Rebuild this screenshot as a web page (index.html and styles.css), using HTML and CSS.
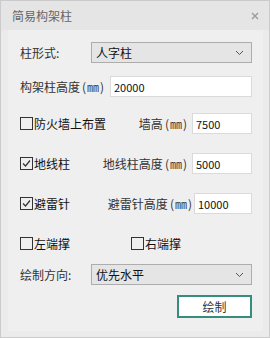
FILE: index.html
```html
<!DOCTYPE html>
<html lang="zh">
<head>
    <meta charset="UTF-8">
    <title>简易构架柱</title>
    <link rel="stylesheet" href="styles.css">
</head>
<body>
    <div class="window">
        <div class="titlebar">
            <span class="title">简易构架柱</span>
            <svg class="close" width="8" height="8" viewBox="0 0 8 8"><path d="M1 1L7 7M7 1L1 7" stroke="#9a9a9a" stroke-width="1.4"/></svg>
        </div>
        <div class="frame">
            <div class="panel">
                <div class="row row-first">
                    <span class="label label-short">柱形式:</span>
                    <div class="select">
                        <span>人字柱</span>
                        <svg width="9" height="6" viewBox="0 0 9 6"><path d="M1 1L4.5 4.5L8 1" fill="none" stroke="#555" stroke-width="1"/></svg>
                    </div>
                </div>
                <div class="row row-height">
                    <span class="label label-long">构架柱高度<span class="unit">(㎜)</span></span>
                    <div class="input input-wide">20000</div>
                </div>
                <div class="row row-wall">
                    <span class="check"><span class="box"></span>防火墙上布置</span>
                    <span class="label label-right">墙高<span class="unit">(㎜)</span></span>
                    <div class="input">7500</div>
                </div>
                <div class="row row-gap">
                    <span class="check"><span class="box"><svg width="11" height="11" viewBox="0 0 11 11"><path d="M2 5.5L4.5 8L9 2.5" fill="none" stroke="#333" stroke-width="1.2"/></svg></span>地线柱</span>
                    <span class="label label-right">地线柱高度<span class="unit">(㎜)</span></span>
                    <div class="input">5000</div>
                </div>
                <div class="row row-gap">
                    <span class="check"><span class="box"><svg width="11" height="11" viewBox="0 0 11 11"><path d="M2 5.5L4.5 8L9 2.5" fill="none" stroke="#333" stroke-width="1.2"/></svg></span>避雷针</span>
                    <span class="label label-right">避雷针高度<span class="unit">(㎜)</span></span>
                    <div class="input input-tight">10000</div>
                </div>
                <div class="row row-gap">
                    <span class="check check-half"><span class="box"></span>左端撑</span>
                    <span class="check"><span class="box"></span>右端撑</span>
                </div>
                <div class="row row-dir">
                    <span class="label label-short">绘制方向:</span>
                    <div class="select">
                        <span>优先水平</span>
                        <svg width="9" height="6" viewBox="0 0 9 6"><path d="M1 1L4.5 4.5L8 1" fill="none" stroke="#555" stroke-width="1"/></svg>
                    </div>
                </div>
                <div class="actions">
                    <button class="draw-btn">绘制</button>
                </div>
            </div>
        </div>
    </div>
</body>
</html>
```

FILE: styles.css
```css
body {
    margin: 0;
    font-family: "Noto Sans CJK SC", "Noto Sans", sans-serif;
    font-size: 12px;
    color: #222;
}
.window {
    width: 270px;
    height: 338px;
    box-sizing: border-box;
    border: 1px solid #cbcbcb;
    background: #ebebeb;
    display: flex;
    flex-direction: column;
}
.titlebar {
    height: 29px;
    background: #e5e5e5;
    display: flex;
    align-items: center;
    justify-content: space-between;
    padding: 0 10px 0 11px;
}
.title {
    color: #666;
    font-size: 12px;
}
.frame {
    flex: 1;
    padding: 0 6px 6px 7px;
    display: flex;
}
.panel {
    flex: 1;
    background: #efefef;
    padding: 12px 11px 0 12px;
}
.row {
    display: flex;
    align-items: center;
    height: 21px;
}
.row-height {
    margin-top: 13px;
}
.row-wall {
    margin-top: 16px;
}
.row-gap {
    margin-top: 19px;
}
.row-dir {
    margin-top: 10px;
}
.label {
    color: #333;
    white-space: nowrap;
}
.unit {
    margin-left: 2px;
    letter-spacing: 1px;
}
.label-short {
    width: 71px;
}
.label-long {
    width: 90px;
}
.label-right {
    margin-left: auto;
    margin-right: 4px;
}
.select {
    flex: 1;
    height: 21px;
    box-sizing: border-box;
    border: 1px solid #adadad;
    background: #e5e5e5;
    display: flex;
    align-items: center;
    justify-content: space-between;
    padding: 0 7px 0 4px;
    font-size: 12px;
    color: #111;
}
.input {
    width: 60px;
    height: 21px;
    box-sizing: border-box;
    border: 1px solid #dadada;
    background: #fff;
    padding: 0 3px;
    display: flex;
    align-items: center;
    font-size: 11px;
    color: #111;
}
.input-wide {
    flex: 1;
}
.input-tight {
    width: 58px;
    margin-left: -3px;
}
.check {
    display: flex;
    align-items: center;
    gap: 1px;
    font-size: 12px;
    color: #111;
}
.check-half {
    width: 111px;
}
.box {
    width: 13px;
    height: 13px;
    box-sizing: border-box;
    border: 1px solid #333;
    display: flex;
    align-items: center;
    justify-content: center;
}
.actions {
    display: flex;
    justify-content: flex-end;
    margin-top: 10px;
}
.draw-btn {
    width: 75px;
    height: 23px;
    border: 2px solid #358d7e;
    background: #fff;
    font-family: inherit;
    font-size: 12px;
    color: #333;
    padding: 0;
}
```
